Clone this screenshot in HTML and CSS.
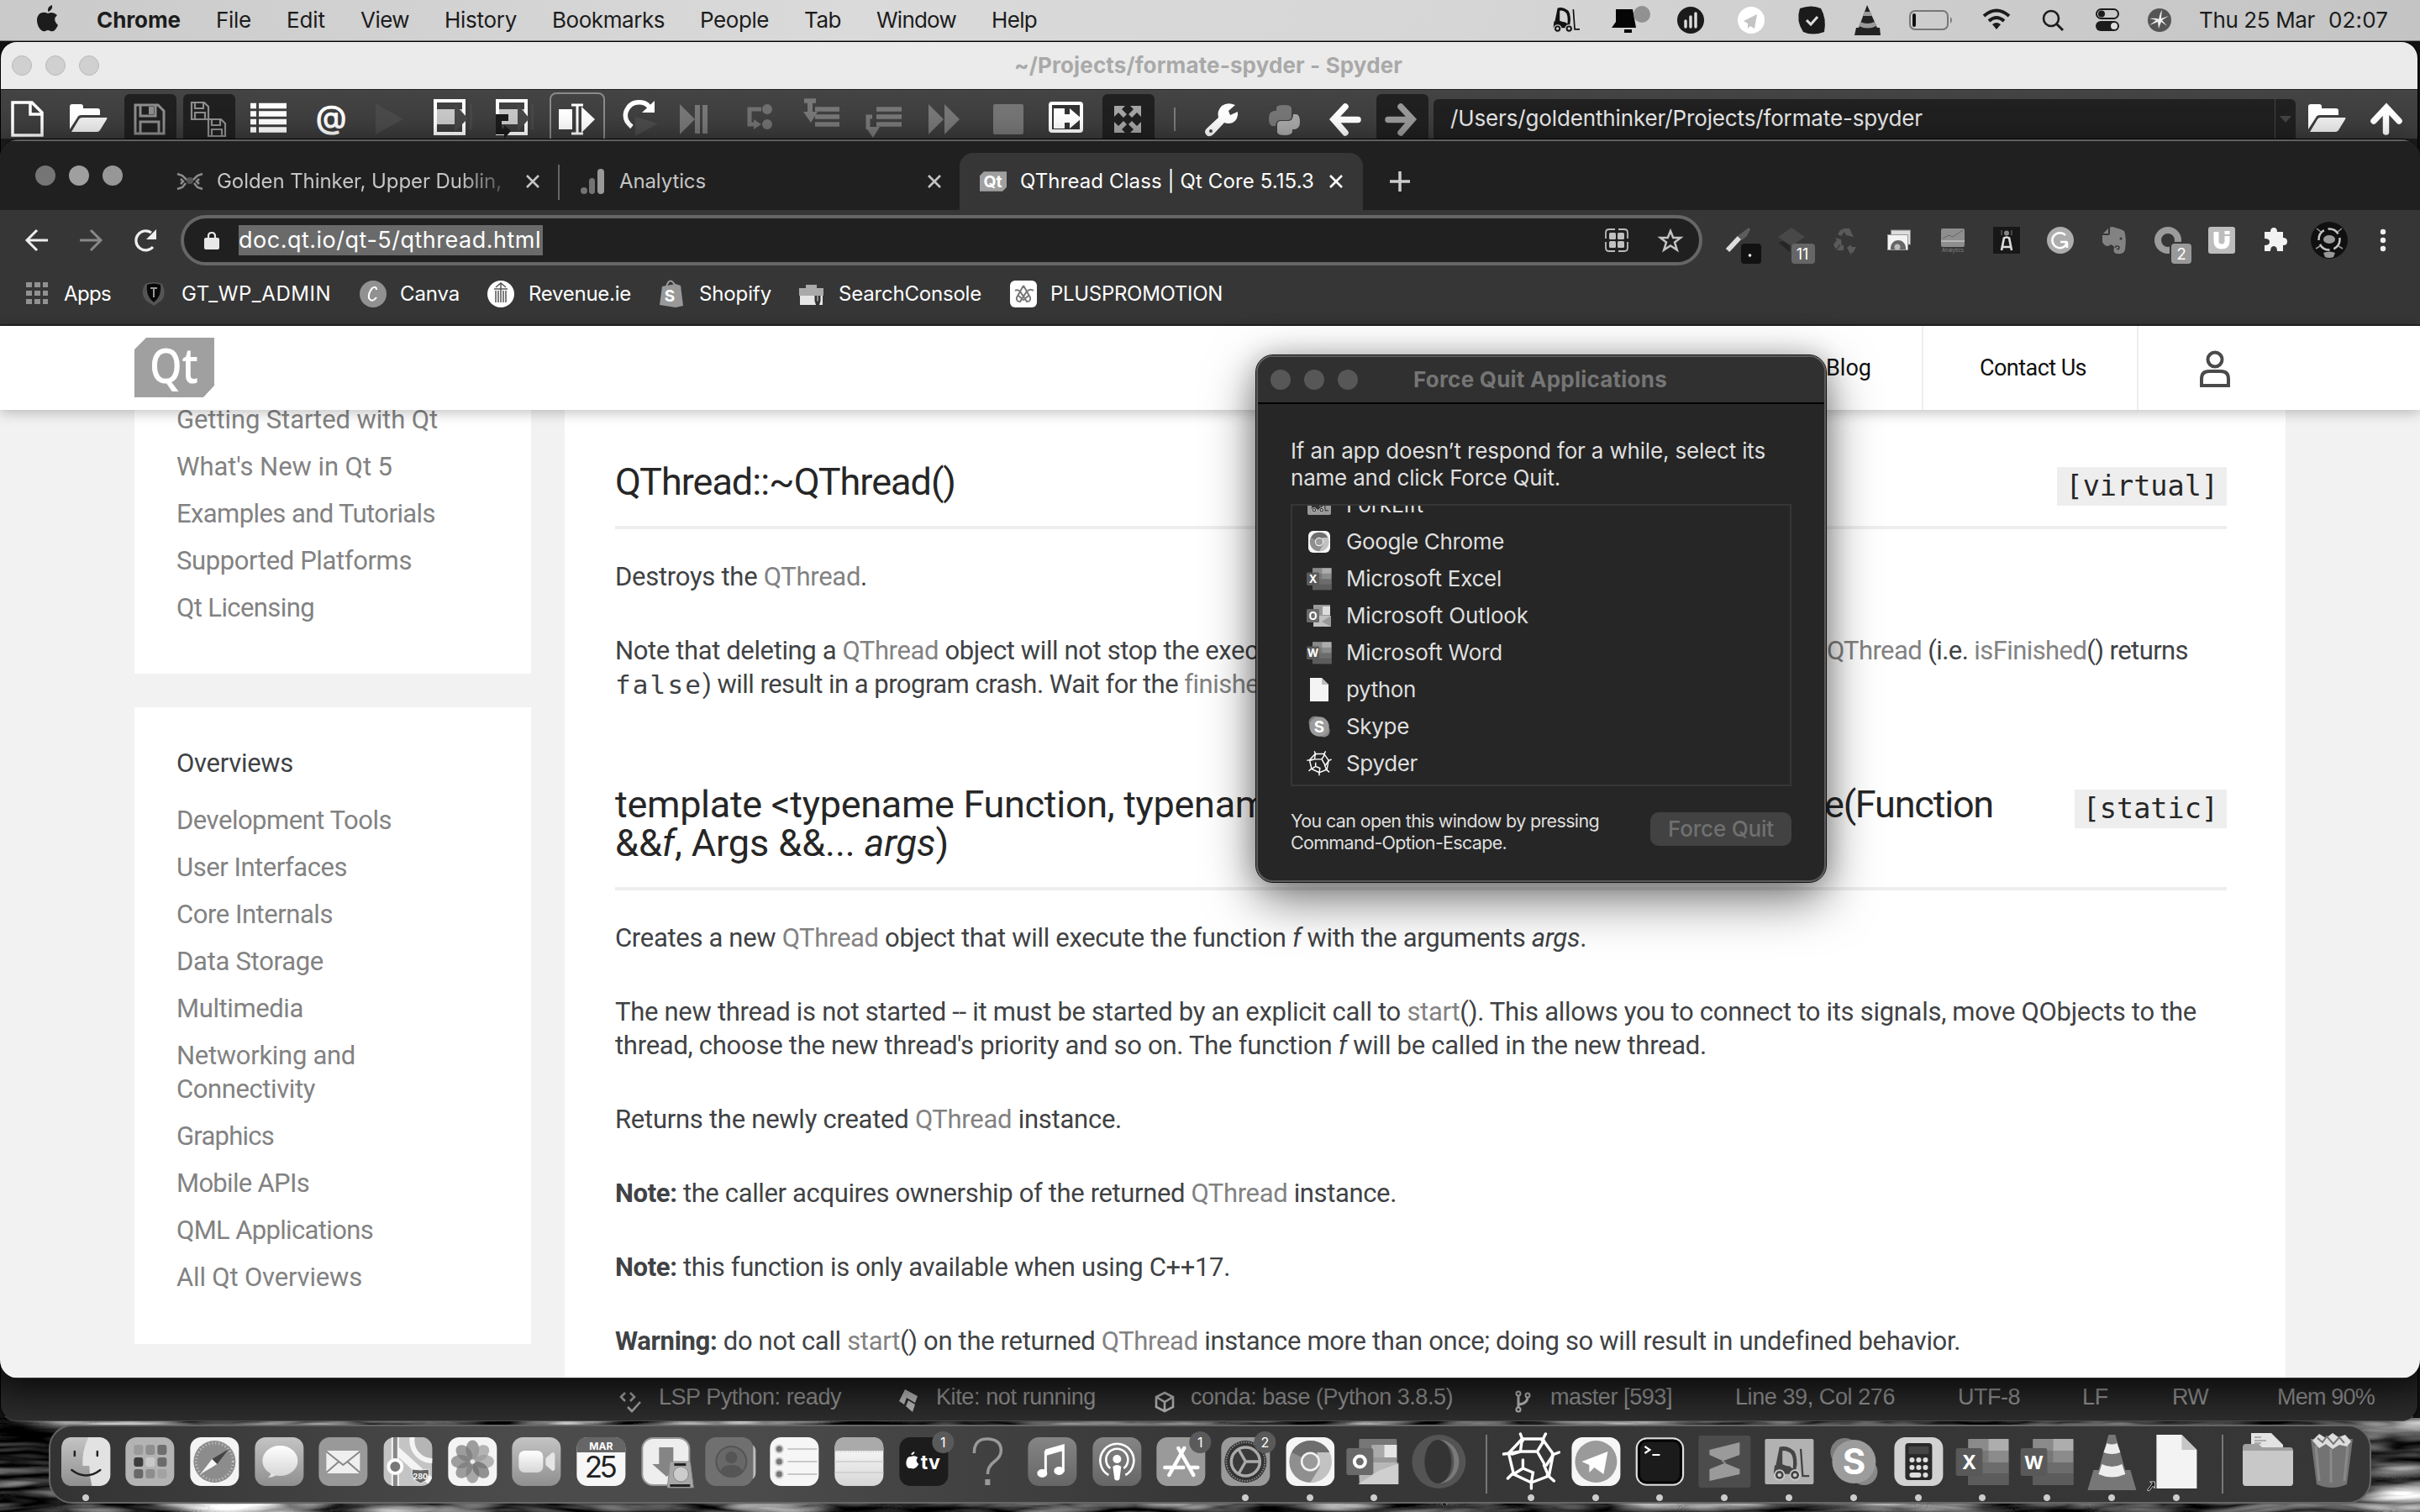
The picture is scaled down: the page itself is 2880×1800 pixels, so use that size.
FILE: index.html
```html
<!DOCTYPE html>
<html lang="en">
<head>
<meta charset="utf-8">
<title>QThread Class | Qt Core 5.15.3</title>
<link rel="stylesheet" href="styles.css">
</head>
<body>
<svg width="0" height="0" class="defs">
  <defs>
    <linearGradient id="lt" x1="0" y1="0" x2="0" y2="1"><stop offset="0" stop-color="#c4c4c4"/><stop offset="1" stop-color="#8f8f8f"/></linearGradient>
    <linearGradient id="md" x1="0" y1="0" x2="0" y2="1"><stop offset="0" stop-color="#858585"/><stop offset="1" stop-color="#666"/></linearGradient>
    <linearGradient id="wh" x1="0" y1="0" x2="0" y2="1"><stop offset="0" stop-color="#fff"/><stop offset="1" stop-color="#d6d6d6"/></linearGradient>
    <filter id="ripple" x="0" y="0" width="100%" height="100%" color-interpolation-filters="sRGB">
      <feTurbulence type="turbulence" baseFrequency="0.005 0.035" numOctaves="3" seed="8"/>
      <feColorMatrix values="1.5 0 0 0 -.12  1.5 0 0 0 -.12  1.5 0 0 0 -.12  0 0 0 0 1"/>
    </filter>
    <symbol id="folder" viewBox="0 0 46 34"><path d="M1 31V4q0-3 3-3h10q3 0 3 3v2h17q3 0 3 3v5H15q-4 0-5 3z" fill="#fff"/><path d="M3 34l9-15q1-2 4-2h29q1 0 0 2l-8 13q-1 2-4 2z" fill="#f0f0f0"/></symbol>
    <symbol id="x" viewBox="0 0 18 18"><path d="M2 2l14 14M16 2L2 16" stroke="currentColor" stroke-width="2.6"/></symbol>
    <symbol id="web" viewBox="0 0 70 70"><g fill="none" stroke="#fff" stroke-width="3.4" stroke-linecap="round"><path d="M22 2l3 8M52 2l-4 8M2 26l8-1M68 24l-8 3M7 55l6-6M62 58l-8-7M35 67V58"/><path d="M24 8l24 0 13 18-5 26-21 8-21-10-6-25z"/><path d="M24 8l-2 15 20 0 8-13M42 23l8 14M10 25l12-2M53 39l8-12M25 33l0 10-11 7M25 43l12 5-2 12M50 39l5 12M22 23l-10 3"/></g></symbol>
    <symbol id="fork" viewBox="0 0 40 40"><path fill-rule="evenodd" fill="currentColor" d="M9 4q8-2 15 4 3 4 3 14l-1 6H7L5 24zM12 8v14l11 4q1-13-3-16-4-3-8-2z"/><path d="M27 28h-5l-2-4-16-1-1 9h26z" fill="currentColor"/><path d="M31 6l2 28h7" fill="none" stroke="currentColor" stroke-width="2"/><g fill="currentColor" stroke="#ccc" stroke-width="1.5"><circle cx="9" cy="33" r="5"/><circle cx="25" cy="33" r="5"/></g><g fill="#ccc"><circle cx="9" cy="33" r="2"/><circle cx="25" cy="33" r="2"/></g></symbol>
    <symbol id="office" viewBox="0 0 64 58"><path d="M16 2h46q1 0 1 1v53q0 1-1 1H16q-1 0-1-1V3q0-1 1-1z" fill="#777"/><path d="M15 2h24v14H15z" fill="#8a8a8a"/><path d="M39 2h24v14H39z" fill="#adadad"/><path d="M39 16h24v14H39z" fill="#8b8b8b"/><path d="M15 30h48v13H15z" fill="#6c6c6c"/><path d="M15 43h48v14H15z" fill="#5c5c5c"/><rect y="13" width="32" height="33" rx="3" fill="#595959"/></symbol>
    <symbol id="chrome" viewBox="0 0 58 58"><rect width="58" height="58" rx="13" fill="#f5f5f5"/><circle cx="29" cy="29" r="25" fill="#8f8f8f"/><path d="M29 29L7 18A25 25 0 0 1 52 18z" fill="#6e6e6e"/><path d="M37 18h15A25 25 0 0 1 29 54l11-18z" fill="#c2c2c2"/><circle cx="29" cy="29" r="11.500" fill="#f2f2f2"/><circle cx="29" cy="29" r="9" fill="#9a9a9a"/></symbol>
    <symbol id="skype" viewBox="0 0 58 58"><circle cx="18" cy="18" r="17" fill="#7d7d7d"/><circle cx="41" cy="41" r="16" fill="#888"/><circle cx="29" cy="29" r="26" fill="#9c9c9c"/><text x="29" y="44" text-anchor="middle" class="glyph bold" font-size="42" fill="#fff">S</text></symbol>
  </defs>
</svg>

<svg class="wallpaper" width="2880" height="112"><rect width="2880" height="112" filter="url(#ripple)"/></svg>

<header class="menubar">
  <svg width="115" height="48" viewBox="0 0 115 48"><path d="M62 6q1 6-5 8-1-6 5-8zM57 16q6-3 11 2-6 5 1 12-4 9-9 7-3-2-6 0c-5 2-10-6-10-13 0-8 7-11 13-8z" fill="#1c1c1c"/></svg>
  <nav class="menus">
    <b data-w="100">Chrome</b><span data-w="42">File</span><span data-w="46">Edit</span><span data-w="58">View</span><span data-w="86">History</span><span data-w="134">Bookmarks</span><span data-w="82">People</span><span data-w="44">Tab</span><span data-w="95">Window</span><span data-w="54">Help</span>
  </nav>
  <div class="tray">
    <svg width="60" height="48" viewBox="1840 0 60 48"><use href="#fork" x="1844" y="6" width="38" height="34" color="#111"/></svg>
    <svg width="80" height="48" viewBox="1900 0 80 48"><path d="M1918 33l5-7V11h20l4 22zM1933 35h9v4h-9z" fill="#050505"/><circle cx="1954" cy="17" r="10" fill="#919191"/></svg>
    <svg width="70" height="48" viewBox="1980 0 70 48"><circle cx="2012" cy="24" r="16" fill="#1b1b1b"/><path d="M2006 32v-7M2012 32V20M2018 32V16" stroke="#ddd" stroke-width="3.4" stroke-linecap="round"/></svg>
    <svg width="70" height="48" viewBox="2050 0 70 48"><circle cx="2084" cy="24" r="16" fill="#fff"/><path d="M2075 25l16-8-3 17-5-3-3 3v-6z" fill="#c4c4c4"/></svg>
    <svg width="72" height="48" viewBox="2120 0 72 48"><path d="M2142 10q14-5 25 0 7 12 4 28-14 5-25 0-9-13-4-28z" fill="#1b1b1b"/><path d="M2150 24l5 5 8-9" fill="none" stroke="#ddd" stroke-width="3"/></svg>
    <svg width="68" height="48" viewBox="2192 0 68 48"><path d="M2222 6l12 27h3l1 9h-31l2-9h3z" fill="#222"/><path d="M2219 14h7l2 5h-11zM2214 26q8 4 17 0l2 5q-10 5-21 0z" fill="#999"/></svg>
    <svg width="85" height="48" viewBox="2260 0 85 48"><rect x="2273" y="13" width="45" height="22" rx="6" fill="none" stroke="#777" stroke-width="2"/><rect x="2276" y="16" width="4" height="16" rx="2" fill="#111"/><path d="M2321 20q4 4 0 8z" fill="#777"/></svg>
    <svg width="70" height="48" viewBox="2345 0 70 48"><g fill="none" stroke="#1b1b1b" stroke-width="4"><path d="M2361 19q15-13 30 0M2367 25q9-8 18 0"/></g><path d="M2371 29q5-4 10 0l-5 6z" fill="#1b1b1b"/></svg>
    <svg width="60" height="48" viewBox="2415 0 60 48"><circle cx="2441" cy="22" r="9" fill="none" stroke="#1b1b1b" stroke-width="2.6"/><path d="M2447 28l8 8" stroke="#1b1b1b" stroke-width="3"/></svg>
    <svg width="65" height="48" viewBox="2475 0 65 48"><rect x="2495" y="11" width="26" height="11" rx="5.500" fill="none" stroke="#1b1b1b" stroke-width="2"/><circle cx="2501" cy="16.500" r="4" fill="#1b1b1b"/><rect x="2494" y="25" width="28" height="12" rx="6" fill="#1b1b1b"/><circle cx="2516" cy="31" r="4" fill="#ddd"/></svg>
    <svg width="77" height="48" viewBox="2540 0 77 48"><circle cx="2570" cy="24" r="14" fill="#555"/><path d="M2558 22q9-1 11 1 2-9 4-11-1 8-1 10l9-3-8 5 6 7-7-5-3 8-1-8-10 4 8-6z" fill="#eee"/></svg>
    <span class="date" data-w="138">Thu 25 Mar</span><span data-w="71">02:07</span>
  </div>
</header>

<section class="window spyder">
  <div class="titlebar">
    <div class="lights"><i></i><i></i><i></i></div>
    <b data-w="462">~/Projects/formate-spyder - Spyder</b>
  </div>
  <div class="tools">
    <svg width="68" height="58" viewBox="0 107 68 58"><path d="M15 122h23l12 12v27H15zM36 122v14h14" fill="none" stroke="#fff" stroke-width="3.5"/></svg>
    <svg width="74" height="58" viewBox="68 107 74 58"><use href="#folder" x="82" y="123" width="46" height="34"/></svg>
    <svg width="72" height="58" viewBox="142 107 72 58"><rect x="148" y="112" width="62" height="60" rx="6" fill="#202020"/><g fill="none" stroke="#8d8d8d" stroke-width="3"><path d="M161 125h27l7 7v27h-34z"/><path d="M167 125v13h18v-13M167 159v-14h22v14"/></g><path d="M177 127h6v9h-6z" fill="#8d8d8d"/></svg>
    <svg width="72" height="58" viewBox="214 107 72 58"><rect x="218" y="112" width="62" height="60" rx="6" fill="#202020"/><g fill="none" stroke="#8d8d8d" stroke-width="2.200"><path d="M228 122h15l5 5v15h-20zM232 122v7h10v-7M232 142v-8h12v8"/><path d="M248 142h15l5 5v15h-20zM252 142v7h10v-7M252 162v-8h12v8"/></g></svg>
    <svg width="74" height="58" viewBox="286 107 74 58"><path d="M298 126h7M298 135.500h7M298 145h7M298 154.500h7" stroke="#fff" stroke-width="6.500"/><path d="M308 126h33M308 135.500h33M308 145h33M308 154.500h33" stroke="#fff" stroke-width="6.500"/></svg>
    <svg width="72" height="58" viewBox="360 107 72 58"><text x="394" y="153" text-anchor="middle" class="glyph" font-size="38" fill="#fff" stroke="#fff">@</text></svg>
    <svg width="66" height="58" viewBox="432 107 66 58"><path d="M447 123l33 19-33 18z" fill="#4a4a4a"/></svg>
    <svg width="74" height="58" viewBox="498 107 74 58"><rect x="518" y="120" width="34" height="39" fill="none" stroke="#fff" stroke-width="4"/><path d="M520 130h30v18h-30z" fill="#c8c8c8"/><path d="M541 124l16 17-16 16zM559 124h3v30h-3z" fill="#484848"/></svg>
    <svg width="76" height="58" viewBox="572 107 76 58"><rect x="592" y="120" width="34" height="39" fill="none" stroke="#fff" stroke-width="4"/><path d="M594 130h30v18h-30z" fill="#c8c8c8"/><path d="M616 124l14 17-14 16zM632 124h3v30h-3z" fill="#484848"/><path d="M590 136h15v8h-8v9h3v-4l8 7-8 9v-5h-10z" fill="#1b1b1b"/></svg>
    <svg width="80" height="58" viewBox="648 107 80 58"><rect x="655" y="111" width="64" height="60" rx="7" fill="none" stroke="#8a8a8a" stroke-width="2"/><path d="M665 130h16v24h-16zM692 127l16 15-16 16z" fill="#fff"/><path d="M680 125h14M680 159h14M687 125v34" stroke="#fff" stroke-width="3"/></svg>
    <svg width="72" height="58" viewBox="728 107 72 58"><path d="M756 139l27 8-27 15z" fill="#4b4b4b"/><path d="M752 151q-10-8-7-18 5-13 19-11 7 1 10 8" fill="none" stroke="#fff" stroke-width="5.500"/><path d="M779 120v14h-15z" fill="#fff"/></svg>
    <svg width="68" height="58" viewBox="800 107 68 58"><path d="M809 124l18 18-18 18zM827 125h6v34h-6zM836 125h6v34h-6z" fill="#777"/></svg>
    <svg width="72" height="58" viewBox="868 107 72 58"><path d="M906 130h-14v18h9" fill="none" stroke="#707070" stroke-width="5"/><circle cx="913" cy="130" r="6" fill="#707070"/><circle cx="913" cy="148" r="6" fill="#707070"/><path d="M897 142l9 6-9 6z" fill="#707070"/></svg>
    <svg width="74" height="58" viewBox="940 107 74 58"><path d="M957 120h14M970 130h29M970 139h29M970 148h29" stroke="#777" stroke-width="5.500"/><path d="M961 120v13h-5l9 13 8-13h-6v-13z" fill="#777"/></svg>
    <svg width="74" height="58" viewBox="1014 107 74 58"><path d="M1043 130h30M1043 139h30M1043 148h30" stroke="#777" stroke-width="5.500"/><path d="M1038 139h-5v15" fill="none" stroke="#777" stroke-width="5"/><path d="M1030 151h17l-8 13z" fill="#777"/></svg>
    <svg width="76" height="58" viewBox="1088 107 76 58"><path d="M1105 124l18 18-18 18zM1124 124l18 18-18 18z" fill="#777"/></svg>
    <svg width="70" height="58" viewBox="1164 107 70 58"><rect x="1182" y="124" width="36" height="36" rx="2" fill="#757575"/></svg>
    <svg width="72" height="58" viewBox="1234 107 72 58"><rect x="1250" y="123" width="37" height="33" rx="2" fill="#333" stroke="#fff" stroke-width="4"/><path d="M1254 129h13v24h-13z" fill="#fff"/><path d="M1262 136h11v-7l14 12-14 12v-7h-11z" fill="#fff"/></svg>
    <svg width="74" height="58" viewBox="1306 107 74 58"><rect x="1312" y="112" width="62" height="60" rx="6" fill="#202020"/><g fill="#a5a5a5"><path d="M1326 126h13l-4 4 6 6-4 4-6-6-5 5zM1358 126v13l-5-5-6 6-4-4 6-6-4-4zM1326 158v-13l5 5 6-6 4 4-6 6 4 4zM1358 158h-13l4-4-6-6 4-4 6 6 5-5z"/></g></svg>
    <svg width="40" height="58" viewBox="1380 107 40 58"><path d="M1398 128v28" stroke="#7a7a7a" stroke-width="2"/></svg>
    <svg width="72" height="58" viewBox="1420 107 72 58"><path d="M1470 125l-8 7 2 5 9-4q1 9-6 13-5 2-10 0l-13 14q-5 4-8 1-4-4 0-8l14-13q-2-8 4-14 7-5 16-1z" fill="#fff"/><circle cx="1441" cy="156" r="2" fill="#444"/></svg>
    <svg width="76" height="58" viewBox="1492 107 76 58"><path d="M1519 132v-4q1-3 9-3 9 0 9 4v10q0 4-5 4h-9q-5 1-5 7h-4q-4-1-4-9 0-8 6-9z" fill="#767676"/><path d="M1538 154v3q-1 4-9 4-9 0-9-4v-9q0-4 5-4h9q5-1 5-8h4q4 1 4 9 0 8-6 9z" fill="#a9a9a9"/></svg>
    <svg width="66" height="58" viewBox="1568 107 66 58"><path d="M1601 127l-14 15 14 16M1588 142.500h28" fill="none" stroke="#fff" stroke-width="7.500" stroke-linecap="round"/></svg>
    <svg width="72" height="58" viewBox="1634 107 72 58"><rect x="1638" y="112" width="62" height="60" rx="6" fill="#202020"/><path d="M1667 127l14 15-14 16M1680 142.500h-28" fill="none" stroke="#999" stroke-width="7.500" stroke-linecap="round"/></svg>
    <div class="path"><span data-w="562">/Users/goldenthinker/Projects/formate-spyder</span><i><svg width="14" height="8" viewBox="0 0 14 8"><path d="M0 0h14L7 8z" fill="#444"/></svg></i></div>
    <svg width="74" height="58" viewBox="2732 107 74 58"><use href="#folder" x="2746" y="123" width="46" height="34"/></svg>
    <svg width="72" height="58" viewBox="2806 107 72 58"><path d="M2825 144l15-16 15 16M2839.500 130v27" fill="none" stroke="#fff" stroke-width="7.500" stroke-linecap="round"/></svg>
  </div>
  <div class="status">
    <svg width="46" height="48" viewBox="738 1642 46 48"><path d="M744 1658l-5 5 5 5M750 1658l5 5-5 5M747 1675l5 5 10-11" fill="none" stroke="#999" stroke-width="2.600"/></svg>
    <span data-w="217">LSP Python: ready</span>
    <svg width="44" height="48" viewBox="1070 1642 44 48"><path d="M1077 1654l15 8-3 8-10-6-3 8-6-4zM1081 1667l8 5-3 9-8-7z" fill="#aaa"/></svg>
    <span data-w="190">Kite: not running</span>
    <svg width="42" height="48" viewBox="1375 1642 42 48"><path d="M1386 1658l10 5v12l-10 5-10-5v-12zM1376 1663l10 6 10-6M1386 1669v11" fill="none" stroke="#aaa" stroke-width="2.600"/></svg>
    <span data-w="312">conda: base (Python 3.8.5)</span>
    <svg width="42" height="48" viewBox="1803 1642 42 48"><path d="M1807 1660v16M1807 1672q11-1 11-9" fill="none" stroke="#aaa" stroke-width="3"/><g fill="#292929" stroke="#aaa" stroke-width="2"><circle cx="1807" cy="1659" r="2.500"/><circle cx="1807" cy="1678" r="2.500"/><circle cx="1818" cy="1661" r="2.500"/></g></svg>
    <span data-w="145">master [593]</span><span data-w="190">Line 39, Col 276</span><span data-w="74">UTF-8</span><span data-w="31">LF</span><span data-w="43">RW</span><span data-w="116">Mem 90%</span>
  </div>
</section>

<section class="window chrome">
  <div class="tabs">
    <div class="lights"><i></i><i></i><i></i></div>
    <div class="tab t1"><svg width="32" height="32" viewBox="0 0 32 32"><path d="M1 7l6 2 4 4 3 2h4l3-2 4-4 6-2M1 25l6-2 4-5M31 25l-6-2-4-5M5 13l3 3-3 3M27 13l-3 3 3 3" fill="none" stroke="#8c8c8c" stroke-width="2.500"/><circle cx="16" cy="15" r="4" fill="#555"/></svg><span class="fade" data-w="339">Golden Thinker, Upper Dublin,</span><svg class="close" width="18" height="18"><use href="#x"/></svg></div>
    <div class="tab t2"><svg width="28" height="30" viewBox="0 0 28 30"><circle cx="4" cy="26" r="4" fill="#737373"/><rect x="10" y="11" width="7" height="19" rx="3.500" fill="#737373"/><rect x="20" y="0" width="8" height="30" rx="4" fill="#999"/></svg><span data-w="103">Analytics</span><svg class="close" width="18" height="18"><use href="#x"/></svg></div>
    <div class="tab active"><svg width="32" height="24" viewBox="0 0 33 24"><path d="M5 0h28v19l-5 5H0V5z" fill="#a0a0a0"/><text x="16" y="19" text-anchor="middle" class="glyph bold" font-size="20" fill="#fff">Qt</text></svg><span data-w="350">QThread Class | Qt Core 5.15.3</span><svg class="close" width="18" height="18"><use href="#x"/></svg></div>
    <svg width="88" height="68" viewBox="0 0 88 68"><path d="M44 22v24M32 34h24" stroke="#ccc" stroke-width="3.500"/></svg>
  </div>
  <div class="toolbar">
    <svg width="76" height="68" viewBox="0 252 76 68"><path d="M57 286H32M44 274l-12 12 12 12" fill="none" stroke="#eee" stroke-width="3"/></svg>
    <svg width="64" height="68" viewBox="76 252 64 68"><path d="M95 286h25M108 274l12 12-12 12" fill="none" stroke="#888" stroke-width="3"/></svg>
    <svg width="75" height="68" viewBox="140 252 75 68"><path d="M182 294a11.500 11.500 0 1 1-2-17" fill="none" stroke="#eee" stroke-width="3.200"/><path d="M186 273v12h-12z" fill="#eee"/></svg>
    <div class="omnibox">
      <svg width="18" height="22" viewBox="0 0 18 22"><rect y="8" width="18" height="14" rx="2" fill="#e8e8e8"/><path d="M5 9V6q0-4 4-4t4 4v3" fill="none" stroke="#e8e8e8" stroke-width="2.200"/></svg>
      <span class="sel"><span data-w="360">doc.qt.io/qt-5/qthread.html</span></span>
      <svg class="qr" width="28" height="28" viewBox="0 0 28 28"><path d="M1 12V5q0-4 4-4h7M16 1h7q4 0 4 4v7M27 16v7q0 4-4 4h-7M12 27H5q-4 0-4-4v-7" fill="none" stroke="#bbb" stroke-width="1.800"/><g fill="#c0c0c0"><rect x="5" y="5" width="8" height="8" rx="1.500"/><rect x="15" y="5" width="8" height="8" rx="1.500"/><rect x="5" y="15" width="8" height="8" rx="1.500"/><rect x="15" y="15" width="8" height="8" rx="1.500"/></g></svg>
      <svg width="30" height="30" viewBox="0 0 30 30"><path d="M15 4l3.200 8H27l-7 5.500 2.800 9L15 21.500l-7.800 5 2.800-9L3 12h8.800z" fill="none" stroke="#c4c4c4" stroke-width="2.500"/></svg>
    </div>
    <svg width="74" height="68" viewBox="2026 252 74 68"><path d="M2056 298l14-15" stroke="#ddd" stroke-width="6"/><path d="M2068 281l13-10 2 2-4 8-6 5z" fill="#5c5c5c"/><rect x="2072" y="290" width="24" height="24" rx="4" fill="#121212"/><circle cx="2082.500" cy="304" r="1.800" fill="#fff"/></svg>
    <svg width="64" height="68" viewBox="2100 252 64 68"><path d="M2132 271l16 11-16 11-16-11z" fill="#484848"/><path d="M2117 289l5-2 8 5v8z" fill="#252525"/><rect x="2132" y="290" width="28" height="24" rx="4" fill="#666"/><text x="2145" y="309" text-anchor="middle" class="glyph" font-size="18" fill="#fff">11</text></svg>
    <svg width="64" height="68" viewBox="2164 252 64 68"><path d="M2190 274l5-2h6l5 10-9-2-2-4-4 5-4-2zM2184 283l7 2 1 8-3-2-4 6-3-6 4-5zM2186 298h8v-6h-4M2198 295l5-4v3h6l-4 7h-2v3z" fill="#5a5a5a"/></svg>
    <svg width="64" height="68" viewBox="2228 252 64 68"><rect x="2250.500" y="274" width="23" height="17" fill="#ddd" stroke="#888"/><rect x="2246.500" y="279.500" width="24" height="18" fill="#f4f4f4" stroke="#999"/><path d="M2250 297v-3q2-8 9-8t9 8v3z" fill="#666"/><circle cx="2258" cy="294" r="3.500" fill="#bbb"/></svg>
    <svg width="64" height="68" viewBox="2292 252 64 68"><rect x="2310" y="272" width="28" height="22" rx="2" fill="#8e8e8e"/><path d="M2312 284l7-4 5 2 12-8" fill="none" stroke="#666"/><path d="M2310 287h28" stroke="#ddd"/><text x="2324" y="300" text-anchor="middle" class="glyph" font-size="6" fill="#888">Analytics</text></svg>
    <svg width="64" height="68" viewBox="2356 252 64 68"><rect x="2372" y="270" width="32" height="32" fill="#171717"/><path d="M2385 283l-3 15M2391 283l3 15M2384 284q4-3 8 0M2384 294h8" fill="none" stroke="#ddd" stroke-width="2.600"/><circle cx="2388" cy="277.500" r="3" fill="#888"/><path d="M2382 274v6M2394 274v6" stroke="#777"/></svg>
    <svg width="64" height="68" viewBox="2420 252 64 68"><circle cx="2452" cy="286" r="16" fill="#adadad"/><path d="M2458 280a9 9 0 1 0 1 11v-3h-7M2460 288v7" fill="none" stroke="#fff" stroke-width="2.500"/></svg>
    <svg width="64" height="68" viewBox="2484 252 64 68"><path d="M2502 280v8q2 5 7 5l3-2q4 2 4 3-2 8 4 8 8 1 9-5 2-14-1-22-5-3-11-4-4-2-6 0v7q0 2-2 2z" fill="#828282"/><path d="M2503 278l6-6v6z" fill="#828282"/><path d="M2517 295q2-4 5-1 0 4-3 2" fill="none" stroke="#363636" stroke-width="1.500"/><circle cx="2524" cy="284" r="1.500" fill="#363636"/></svg>
    <svg width="64" height="68" viewBox="2548 252 64 68"><circle cx="2580" cy="286" r="12" fill="none" stroke="#9b9b9b" stroke-width="8"/><rect x="2582" y="288" width="28" height="28" rx="6" fill="#363636"/><rect x="2584" y="290" width="24" height="24" rx="4" fill="#999"/><text x="2596" y="309" text-anchor="middle" class="glyph" font-size="19" fill="#fff">2</text></svg>
    <svg width="64" height="68" viewBox="2612 252 64 68"><rect x="2628" y="270" width="32" height="32" rx="3" fill="#bdbdbd"/><path d="M2637.500 276v11q0 6.500 6.500 6.500t6.500-6.500v-6" fill="none" stroke="#fff" stroke-width="6"/><rect x="2647.500" y="275" width="6" height="4" fill="#fff"/></svg>
    <svg width="60" height="68" viewBox="2676 252 60 68"><path d="M2695 276h7q0-5 4-5t4 5h7v7q5 0 5 4.500t-5 4.500v7h-7q0-6-4-6t-4 6h-7v-7q6 0 6-4t-6-4z" fill="#f2f2f2"/></svg>
    <svg width="76" height="68" viewBox="2736 252 76 68"><circle cx="2772" cy="286" r="22" fill="#101010"/><circle cx="2772" cy="285" r="12.500" fill="none" stroke="#c4c4c4" stroke-width="2.500" stroke-dasharray="14 5"/><ellipse cx="2772" cy="285" rx="7" ry="5" fill="#999"/><path d="M2757 272l5 4M2787 272l-5 4M2756 296l5-3M2788 296l-5-3" stroke="#999" stroke-width="1.500"/><path d="M2765 301q7-3 14 0l-2 5q-5 2-10 0z" fill="#999"/></svg>
    <svg width="60" height="68" viewBox="2812 252 60 68"><g fill="#eee"><circle cx="2836" cy="276" r="3.200"/><circle cx="2836" cy="286" r="3.200"/><circle cx="2836" cy="296" r="3.200"/></g></svg>
  </div>
  <div class="bookmarks">
    <svg width="76" height="40" viewBox="0 330 76 40"><path d="M31 339h7M41 339h7M51 339h6M31 349h7M41 349h7M51 349h6M31 359h7M41 359h7M51 359h6" stroke="#919191" stroke-width="6"/></svg><span data-w="56">Apps</span>
    <svg width="51" height="40" viewBox="0 0 51 40"><path d="M8 8q9-4 20 0 6 12-1 20l-9 6-9-6q-8-9-1-20z" fill="#555"/><path d="M10 9q8-3 16 0 2 13-8 21-10-8-8-21z" fill="#080808"/><path d="M14 13h8M18 13v11" stroke="#999" stroke-width="2"/></svg><span data-w="178">GT_WP_ADMIN</span>
    <svg width="49" height="40" viewBox="0 0 49 40"><circle cx="17" cy="20" r="16" fill="#919191"/><path d="M21 15q0-5-5-2-5 6-4 12 4 6 9-1" fill="none" stroke="#fff" stroke-width="2"/></svg><span data-w="71">Canva</span>
    <svg width="49" height="40" viewBox="0 0 49 40"><circle cx="16" cy="20" r="16" fill="#fff"/><path d="M8 14h16M16 8v22M10 16v14M22 16v14M13 16v14M19 16v14M10 12l6-5 6 5" fill="none" stroke="#555" stroke-width="1.500"/></svg><span data-w="122">Revenue.ie</span>
    <svg width="48" height="40" viewBox="0 0 48 40"><path d="M4 11l16-3 6 2 3 24-9 2-19-3z" fill="#999"/><path d="M9 11q4-12 10-2" fill="none" stroke="#999" stroke-width="2"/><text x="13" y="29" text-anchor="middle" class="glyph bold" font-size="19" fill="#fff">S</text></svg><span data-w="86">Shopify</span>
    <svg width="47" height="40" viewBox="0 0 47 40"><path d="M1 14h27v19H1z" fill="#e6e6e6"/><path d="M1 14h27v7H1zM9 14v-4h11v4" fill="#aaa" stroke="#aaa" stroke-width="2"/><path d="M20 22v6l2 6 2-6v-6" fill="none" stroke="#333" stroke-width="3"/></svg><span data-w="170">SearchConsole</span>
    <svg width="49" height="40" viewBox="0 0 49 40"><rect x="1" y="4" width="32" height="32" rx="6" fill="#fff"/><path d="M17 10l-8 14q-1 5 4 5l8-12q4-4 8-1M17 10l8 14q1 5-4 5l-8-12q-3-3-6-1M11 22l6 5 6-5" fill="none" stroke="#777" stroke-width="2"/></svg><span data-w="205">PLUSPROMOTION</span>
  </div>
  <div class="page">
    <header class="site">
      <svg class="logo" width="95" height="71" viewBox="0 0 95 71"><path d="M14 0h81v57L82 71H0V14z" fill="#a0a0a0"/><text x="47" y="54" text-anchor="middle" class="qt" font-size="58" fill="#fff" textLength="58" lengthAdjust="spacingAndGlyphs">Qt</text></svg>
      <nav><span data-w="54">Blog</span><span class="contact"><span data-w="127">Contact Us</span></span><span class="user"><svg width="38" height="44" viewBox="0 0 38 44"><circle cx="19" cy="11" r="8.500" fill="none" stroke="#4a4a4a" stroke-width="4"/><path d="M3 42V34q0-9 9-9h14q9 0 9 9v8z" fill="none" stroke="#4a4a4a" stroke-width="4"/></svg></span></nav>
    </header>
    <div class="columns">
      <aside>
        <ul class="card first"><li><span data-w="311">Getting Started with Qt</span></li><li><span data-w="257">What's New in Qt 5</span></li><li><span data-w="308">Examples and Tutorials</span></li><li><span data-w="280">Supported Platforms</span></li><li><span data-w="164">Qt Licensing</span></li></ul>
        <div class="card second"><h3><span data-w="139">Overviews</span></h3>
        <ul><li><span data-w="256">Development Tools</span></li><li><span data-w="203">User Interfaces</span></li><li><span data-w="186">Core Internals</span></li><li><span data-w="175">Data Storage</span></li><li><span data-w="151">Multimedia</span></li><li><span data-w="213">Networking and</span><br><span data-w="165">Connectivity</span></li><li><span data-w="116">Graphics</span></li><li><span data-w="158">Mobile APIs</span></li><li><span data-w="234">QML Applications</span></li><li><span data-w="221">All Qt Overviews</span></li></ul></div>
      </aside>
      <main>
        <h2><div><span data-w="405">QThread::~QThread()</span></div><code>[virtual]</code></h2>
        <p><span data-w="300">Destroys the <a>QThread</a>.</span></p>
        <p><span data-w="765">Note that deleting a <a>QThread</a> object will not stop the exec</span><span class="covered" data-w="430"><a>QThread</a> (i.e. <a>isFinished</a>() returns</span><br><span class="mono" data-w="104">false</span><span data-w="661">) will result in a program crash. Wait for the <a>finishe</a></span></p>
        <h2><div><span data-w="777">template &lt;typename Function, typenam</span><span class="covered" data-w="201">e(Function</span><br><span data-w="397">&amp;&amp;<i>f</i>, Args &amp;&amp;... <i>args</i>)</span></div><code>[static]</code></h2>
        <p><span data-w="1156">Creates a new <a>QThread</a> object that will execute the function <i>f</i> with the arguments <i>args</i>.</span></p>
        <p><span data-w="1882">The new thread is not started -- it must be started by an explicit call to <a>start</a>(). This allows you to connect to its signals, move QObjects to the</span><br><span data-w="1299">thread, choose the new thread's priority and so on. The function <i>f</i> will be called in the new thread.</span></p>
        <p><span data-w="603">Returns the newly created <a>QThread</a> instance.</span></p>
        <p><span data-w="930"><b>Note:</b> the caller acquires ownership of the returned <a>QThread</a> instance.</span></p>
        <p><span data-w="732"><b>Note:</b> this function is only available when using C++17.</span></p>
        <p><span data-w="1600"><b>Warning:</b> do not call <a>start</a>() on the returned <a>QThread</a> instance more than once; doing so will result in undefined behavior.</span></p>
      </main>
    </div>
  </div>
</section>

<section class="window dialog">
  <div class="titlebar"><div class="lights"><i></i><i></i><i></i></div><b data-w="302">Force Quit Applications</b></div>
  <div class="body">
    <p><span data-w="565">If an app doesn’t respond for a while, select its</span><br><span data-w="321">name and click Force Quit.</span></p>
    <ul>
      <li><svg width="30" height="32" viewBox="0 0 30 32"><rect x="1" y="2" width="28" height="26" rx="2" fill="#999"/><use href="#fork" x="4" y="3" width="22" height="24" color="#333"/></svg><span data-w="92">ForkLift</span></li>
      <li><svg width="30" height="32" viewBox="0 0 30 32"><use href="#chrome" x="2" y="3" width="26" height="26"/></svg><span data-w="188">Google Chrome</span></li>
      <li><svg width="30" height="32" viewBox="0 0 30 32"><use href="#office" y="2" width="30" height="28"/><text x="7.500" y="21" text-anchor="middle" class="glyph bold" font-size="13" fill="#fff">X</text></svg><span data-w="185">Microsoft Excel</span></li>
      <li><svg width="30" height="32" viewBox="0 0 30 32"><path d="M8 3h20v13H8z" fill="#999"/><path d="M19 5h9v10h-9z" fill="#ddd"/><path d="M8 16h21v13H8z" fill="#c0c0c0"/><path d="M29 16v13L18 23z" fill="#999"/><rect y="8" width="15" height="16" rx="1.500" fill="#6a6a6a"/><text x="7.500" y="21" text-anchor="middle" class="glyph bold" font-size="13" fill="#fff">O</text></svg><span data-w="217">Microsoft Outlook</span></li>
      <li><svg width="30" height="32" viewBox="0 0 30 32"><use href="#office" y="2" width="30" height="28"/><text x="7.500" y="21" text-anchor="middle" class="glyph bold" font-size="13" fill="#fff">W</text></svg><span data-w="186">Microsoft Word</span></li>
      <li><svg width="30" height="32" viewBox="0 0 30 32"><path d="M4 2h14l8 8v20H4z" fill="#f4f4f4"/><path d="M18 2v8h8z" fill="#bbb"/></svg><span data-w="83">python</span></li>
      <li><svg width="30" height="32" viewBox="0 0 30 32"><use href="#skype" x="2" y="3" width="26" height="26"/></svg><span data-w="75">Skype</span></li>
      <li><svg width="30" height="32" viewBox="0 0 30 32"><use href="#web" y="1" width="30" height="30"/></svg><span data-w="85">Spyder</span></li>
    </ul>
    <footer><p><span data-w="367">You can open this window by pressing</span><br><span data-w="257">Command-Option-Escape.</span></p><button><span data-w="126">Force Quit</span></button></footer>
  </div>
</section>

<div class="dock">
  <div class="g1">
    <svg class="on" viewBox="-9 -14 76 92"><rect width="58" height="58" rx="13" fill="#e2e2e2"/><path d="M13 0h19q-8 16-7 34h8q0 12 3 24H13Q0 58 0 45V13Q0 0 13 0z" fill="url(#lt)"/><path d="M15.500 17v5M42.500 17v5M12 39q17 13 34 0" fill="none" stroke="#222" stroke-width="2.500" stroke-linecap="round"/></svg>
    <svg viewBox="-9 -14 76 92"><rect width="58" height="58" rx="13" fill="#b3b3b3"/><g><rect x="10" y="9" width="11" height="12" rx="3" fill="#9a9a9a"/><rect x="24" y="9" width="11" height="12" rx="3" fill="#8e8e8e"/><rect x="38" y="9" width="11" height="12" rx="3" fill="#6e6e6e"/><rect x="10" y="24" width="11" height="11" rx="3" fill="#3d3d3d"/><rect x="24" y="24" width="11" height="11" rx="3" fill="#c9c9c9"/><rect x="38" y="24" width="11" height="11" rx="3" fill="#6b6b6b"/><rect x="10" y="38" width="11" height="11" rx="3" fill="#686868"/><rect x="24" y="38" width="11" height="11" rx="3" fill="#8d8d8d"/><rect x="38" y="38" width="11" height="11" rx="3" fill="#a2a2a2"/></g></svg>
    <svg viewBox="-9 -14 76 92"><rect width="58" height="58" rx="13" fill="#f4f4f4"/><circle cx="29" cy="29" r="25" fill="#8c8c8c"/><circle cx="29" cy="29" r="22" fill="none" stroke="#ccc" stroke-width="3" stroke-dasharray="1 3"/><path d="M46 14L26 26l6 6z" fill="#444"/><path d="M12 44l14-18 6 6z" fill="#f5f5f5"/></svg>
    <svg viewBox="-9 -14 76 92"><rect width="58" height="58" rx="13" fill="url(#lt)"/><ellipse cx="30" cy="28" rx="21" ry="18" fill="url(#wh)"/><path d="M19 42q0 4-4 6 8 0 11-4z" fill="#e0e0e0"/></svg>
    <svg viewBox="-9 -14 76 92"><rect width="58" height="58" rx="13" fill="#999"/><rect x="9" y="16" width="40" height="27" rx="2" fill="#efefef"/><path d="M9 17l20 16 20-16M9 42l15-13M49 42L34 29" fill="none" stroke="#888" stroke-width="2"/></svg>
    <svg viewBox="-9 -14 76 92"><clipPath id="mapclip"><rect width="58" height="58" rx="13"/></clipPath><g clip-path="url(#mapclip)"><rect width="58" height="58" fill="#c4c4c4"/><circle cx="58" cy="4" r="24" fill="#b5b5b5" stroke="#f4f4f4" stroke-width="6"/><path d="M14 0v58M14 14l44 40" stroke="#f4f4f4" stroke-width="9"/><path d="M14 0v58" stroke="#888" stroke-width="5"/></g><circle cx="14" cy="35" r="8" fill="#777" stroke="#fff" stroke-width="4"/><path d="M34 38q10 2 20 0 2 13-10 17-12-5-10-17z" fill="#666" stroke="#eee"/><text x="44" y="50" text-anchor="middle" class="glyph bold" font-size="9" fill="#fff">280</text></svg>
    <svg viewBox="-9 -14 76 92"><rect width="58" height="58" rx="13" fill="#f4f4f4"/><g><g fill-opacity=".7"><ellipse cx="29" cy="15" rx="8" ry="11.500" fill="#777"/><ellipse cx="29" cy="43" rx="8" ry="11.500" fill="#888"/><ellipse cx="15" cy="29" rx="11.500" ry="8" fill="#777"/><ellipse cx="43" cy="29" rx="11.500" ry="8" fill="#999"/><g transform="rotate(45 29 29)"><ellipse cx="29" cy="15" rx="8" ry="11.500" fill="#999"/><ellipse cx="29" cy="43" rx="8" ry="11.500" fill="#777"/><ellipse cx="15" cy="29" rx="11.500" ry="8" fill="#777"/><ellipse cx="43" cy="29" rx="11.500" ry="8" fill="#666"/></g></g><circle cx="29" cy="29" r="2" fill="#eee"/></g></svg>
    <svg viewBox="-9 -14 76 92"><rect width="58" height="58" rx="13" fill="url(#lt)"/><rect x="8" y="16" width="29" height="26" rx="7" fill="url(#wh)"/><path d="M40 25l8-7q3 0 3 3v16q0 3-3 3l-8-7z" fill="#e5e5e5"/></svg>
    <svg viewBox="-9 -14 76 92"><rect width="58" height="58" rx="13" fill="#f7f7f7"/><path d="M0 18v-5Q0 0 13 0h32q13 0 13 13v5z" fill="#666"/><text x="29" y="14.500" text-anchor="middle" class="glyph bold" font-size="12" fill="#fff">MAR</text><text x="29" y="48" text-anchor="middle" class="glyph" font-size="35" textLength="39" fill="#222">25</text></svg>
    <svg viewBox="-9 -14 76 92"><rect x="1" y="1" width="56" height="56" rx="13" fill="#eee" stroke="#999" stroke-width="2"/><path d="M21 12h17v20h8L30 47 13 32h8z" fill="#858585"/><path d="M34 29h24l4 31H31z" fill="#a7a7a7" stroke="#888"/><circle cx="47" cy="44" r="9" fill="#ccc" stroke="#888"/><path d="M39 31h14v3H39zM34 56h24v3H34z" fill="#222"/></svg>
    <svg viewBox="-9 -14 76 92"><rect x="4" y="8" width="56" height="43" rx="8" fill="#bbb"/><rect width="57" height="58" rx="13" fill="#707070"/><circle cx="31" cy="29" r="18" fill="#686868" stroke="#555" stroke-width="2"/><circle cx="31" cy="24" r="7" fill="#555"/><path d="M18 41q2-8 13-8t13 8q-13 12-26 0z" fill="#555"/></svg>
    <svg viewBox="-9 -14 76 92"><rect width="58" height="58" rx="13" fill="#f6f6f6"/><path d="M21 14h35M21 29h35M21 44h35" stroke="#bbb" stroke-width="1.500"/><g fill="#777" stroke="#ccc" stroke-width="2"><circle cx="11" cy="14" r="4.500"/><circle cx="11" cy="29" r="4.500"/><circle cx="11" cy="44" r="4.500"/></g></svg>
    <svg viewBox="-9 -14 76 92"><rect width="58" height="58" rx="13" fill="url(#wh)"/><path d="M0 16v-3Q0 0 13 0h32q13 0 13 13v3z" fill="#aaa"/><path d="M0 29h58M0 42h58" stroke="#ccc" stroke-width="1.500"/><path d="M1 17h56" stroke="#999" stroke-dasharray="1 2"/></svg>
    <svg viewBox="-9 -14 76 92"><rect width="58" height="58" rx="13" fill="#1c1c1c"/><path d="M18 17q0 4-4 4 0-3 4-4zM14 23q4-2 8 1-4 4 1 8-4 7-9 5-6 1-6-7 1-8 6-7z" fill="#fff"/><text x="37" y="38" text-anchor="middle" class="glyph bold" font-size="23" textLength="23" fill="#fff">tv</text><circle cx="52" cy="6" r="13" fill="#5a5a5a"/><text x="52" y="12" text-anchor="middle" class="glyph" font-size="16" fill="#fff">1</text></svg>
    <svg viewBox="-9 -14 76 92"><path d="M13 19q0-18 17-17 15 1 15 14 0 7-8 13-8 6-8 15" fill="none" stroke="#999" stroke-width="3.500"/><path d="M26 50h6v7h-6z" fill="#999"/></svg>
    <svg viewBox="-9 -14 76 92"><rect width="58" height="58" rx="13" fill="url(#md)"/><path d="M21 16l21-6v31M21 16v27" fill="none" stroke="#fff" stroke-width="3"/><path d="M21 15l21-6v7l-21 6z" fill="#fff"/><ellipse cx="17" cy="43" rx="6" ry="5" fill="#fff"/><ellipse cx="37" cy="40" rx="6" ry="5" fill="#fff"/></svg>
    <svg viewBox="-9 -14 76 92"><rect width="58" height="58" rx="13" fill="url(#md)"/><g fill="none" stroke="#fff" stroke-width="2.600"><path d="M19 45A20 20 0 1 1 39 45"/><path d="M21 37A13 13 0 1 1 37 37"/></g><circle cx="29" cy="26" r="5" fill="#fff"/><path d="M24 35q5-4 10 0l-2 15q-3 3-6 0z" fill="#fff"/></svg>
    <svg viewBox="-9 -14 76 92"><rect width="58" height="58" rx="13" fill="#9a9a9a"/><path d="M33 13L15 45M26 13l18 32M10 36h22M39 36h10" stroke="#fff" stroke-width="4.500" stroke-linecap="round"/><circle cx="52" cy="6" r="13" fill="#5a5a5a"/><text x="52" y="12" text-anchor="middle" class="glyph" font-size="16" fill="#fff">1</text></svg>
    <svg class="on" viewBox="-9 -14 76 92"><rect width="58" height="58" rx="13" fill="#9a9a9a"/><circle cx="29" cy="29" r="25" fill="#333"/><circle cx="29" cy="29" r="23" fill="none" stroke="#888" stroke-width="2" stroke-dasharray="1.500 1.500"/><circle cx="29" cy="29" r="17" fill="#3a3a3a" stroke="#aaa" stroke-width="3.500"/><path d="M29 29h16M29 29l-8-14M29 29l-8 14" stroke="#aaa" stroke-width="3.500"/><circle cx="52" cy="6" r="13" fill="#5a5a5a"/><text x="52" y="12" text-anchor="middle" class="glyph" font-size="16" fill="#fff">2</text></svg>
    <svg class="on" viewBox="-9 -14 76 92"><use href="#chrome" width="58" height="58"/></svg>
    <svg class="on" viewBox="-9 -14 76 92"><path d="M12 2h43q1 0 1 2v52H11V3z" fill="#777"/><path d="M26 9h15v17H26z" fill="#aaa"/><path d="M41 9h15v17H41z" fill="#e5e5e5"/><path d="M26 24h30v16H26z" fill="#999"/><path d="M10 30l48 0-18 12 18 14H12z" fill="#b7b7b7"/><path d="M58 31v25L10 56l24-16z" fill="#cfcfcf"/><rect x="-4" y="13" width="32" height="32" rx="3" fill="#6a6a6a"/><circle cx="12" cy="29" r="6.500" fill="none" stroke="#fff" stroke-width="4"/></svg>
    <svg viewBox="-9 -14 76 92"><ellipse cx="29" cy="29" rx="32" ry="32" fill="#545454"/><path d="M29 3a24 26 0 0 1 0 52q18-6 18-26T29 3z" fill="#7a7a7a"/><ellipse cx="28" cy="29" rx="16" ry="26" fill="#343434"/></svg>
  </div>
  <i class="sep"></i>
  <div class="g2">
    <svg class="on" viewBox="-9 -14 76 92"><use href="#web" x="-6" y="-6" width="70" height="70"/></svg>
    <svg class="on" viewBox="-9 -14 76 92"><rect width="58" height="58" rx="13" fill="#f6f6f6"/><circle cx="29" cy="29" r="25" fill="#9a9a9a"/><path d="M12 29l31-12-5 27-11-8-6 6v-9z" fill="#fff"/></svg>
    <svg class="on" viewBox="-9 -14 76 92"><rect x="1.500" y="1.500" width="55" height="55" rx="12" fill="#1b1b1b" stroke="#ddd" stroke-width="2.500"/><rect x="4" y="4" width="50" height="50" rx="9" fill="none" stroke="#000" stroke-width="3"/><path d="M11 11l6 4-6 4M20 21h9" fill="none" stroke="#fff" stroke-width="2.200"/></svg>
    <svg class="on" viewBox="-9 -14 76 92"><rect x="-2" y="-2" width="62" height="62" rx="3" fill="#4c4c4c"/><path d="M47 6v15L25 29l22 9v6L11 52V38l20-8-20-9v-6z" fill="#9a9a9a"/></svg>
    <svg class="on" viewBox="-9 -14 76 92"><rect y="2" width="58" height="54" rx="2" fill="#b2b2b2"/><use href="#fork" x="7" y="7" width="46" height="46" color="#444"/></svg>
    <svg class="on" viewBox="-9 -14 76 92"><use href="#skype" width="58" height="58"/></svg>
    <svg class="on" viewBox="-9 -14 76 92"><rect width="58" height="58" rx="13" fill="#d2d2d2"/><rect x="13" y="7" width="32" height="44" rx="4" fill="#292929"/><rect x="17" y="11" width="24" height="9" fill="#444"/><path d="M21 27h.1M29 27h.1M37 27h.1M21 36h.1M29 36h.1M37 36h.1M37 45h.1M21 45h8" stroke="#ddd" stroke-width="6" stroke-linecap="round"/></svg>
    <svg class="on" viewBox="-9 -14 76 92"><use href="#office" x="-3" width="64" height="58"/><text x="13" y="38" text-anchor="middle" class="glyph bold" font-size="23" fill="#fff">X</text></svg>
    <svg class="on" viewBox="-9 -14 76 92"><use href="#office" x="-3" width="64" height="58"/><text x="13" y="38" text-anchor="middle" class="glyph bold" font-size="22" fill="#fff">W</text></svg>
    <svg class="on" viewBox="-9 -14 76 92"><path d="M7 39h44l7 24H0z" fill="#777"/><path d="M25-3h8l14 50q-18 12-36 0z" fill="#777"/><path d="M23 7q6 3 12 0l4 11q-10 4-20 0zM17 32q12 6 24 0l4 12q-16 7-32 0z" fill="#eee"/></svg>
    <svg class="on" viewBox="-9 -14 76 92"><path d="M5-3h30l18 18v46H5z" fill="#f3f3f3"/><path d="M35-3v18h18z" fill="#c5c5c5"/><path d="M-6 63l6-8-3-2h6v8l-2-3-5 6z" fill="#111" stroke="#ccc"/></svg>
  </div>
  <i class="sep"></i>
  <div class="g3">
    <svg viewBox="-9 -14 76 92"><path d="M9-5h24l14 14v20H9z" fill="#e3e3e3"/><path d="M13 0h8M13 4h14M13 7h8" stroke="#777"/><path d="M-1 12q0-4 4-4h15l4 4h33q4 0 4 4v38q0 4-4 4H3q-4 0-4-4z" fill="#a0a0a0"/><path d="M-1 16h60v37q0 5-4 5H3q-4 0-4-5z" fill="#c8c8c8"/></svg>
    <svg viewBox="-9 -14 76 92"><path d="M4 2h50l-7 54q-18 8-36 0z" fill="#737373"/><path d="M10 10l4 42M48 10l-4 42M28 14v40" stroke="#999" stroke-width="3" opacity=".6"/><path d="M6 4l8-8 8 5 8-6 7 5 8-3 7 8-5 6-9-2-8 5-8-6-8 5z" fill="#ddd"/><path d="M12 1l6 5 5-7 8 9 7-8 6 7" fill="none" stroke="#777" stroke-width="2"/></svg>
  </div>
</div>
<script src="fit.js"></script>
</body>
</html>
```
FILE: styles.css
```css
* { box-sizing: border-box; }
body { margin: 0; width: 2880px; height: 1800px; overflow: hidden; position: relative; background: #111; font-family: Inter, "Liberation Sans", sans-serif; font-size: 26px; color: #1c1c1c; }
svg { display: block; flex: none; overflow: visible; }
span, b, li { white-space: nowrap; }
i { font-style: normal; }
ul, p, h2, h3 { margin: 0; padding: 0; list-style: none; font-weight: 400; }
[data-w] { display: inline-block; white-space: pre; }
.defs { position: absolute; }
.wallpaper { position: absolute; left: 0; bottom: 0; }
.glyph { font-family: Inter, sans-serif; }
.bold { font-weight: 700; }
.qt { font-family: "Open Sans", sans-serif; font-weight: 600; }
.window { position: absolute; overflow: hidden; isolation: isolate; }
.lights { display: flex; gap: 16px; }
.lights i { width: 24px; height: 24px; border-radius: 50%; }

.menubar { height: 49px; display: flex; line-height: 47px; background: linear-gradient(90deg, #cacaca, #dadada 35%, #d6d6d6 60%, #c4c4c4); border-bottom: 1px solid #777; }
.menus { display: flex; gap: 42px; flex: 1; }
.tray { display: flex; width: 1040px; }
.date { margin-right: 16px; }

.spyder { left: 0; top: 49px; width: 2878px; height: 1643px; border-radius: 20px; background: #1d1d1d; border: 1px solid #000; border-bottom-color: #4a4a4a; display: flex; flex-direction: column; justify-content: space-between; }
.spyder .titlebar { height: 57px; background: #ebebeb; border-bottom: 1px solid #222; display: grid; grid-template-columns: 1193px auto; align-items: center; justify-items: start; padding-left: 13px; color: #a9a9a9; line-height: 54px; flex: none; }
.spyder .lights i { background: #d0d0d0; border: 1px solid #b9b9b9; }
.tools { height: 58px; margin-bottom: auto; margin-left: -1px; width: 2880px; background: linear-gradient(#444, #3b3b3b); display: flex; }
.path { width: 1026px; height: 47px; margin-top: 11px; border-radius: 6px 6px 0 0; background: #202020; display: flex; justify-content: space-between; padding-left: 20px; line-height: 46px; color: #e6e6e6; }
.path i { width: 25px; border-left: 1px solid #444; display: flex; align-items: center; justify-content: center; }
.status { height: 49px; background: linear-gradient(#1e1e1e, #2c2c2c); display: flex; padding-left: 737px; font: 27px/42px "Liberation Sans", sans-serif; color: #8a8a8a; }
.status span:nth-of-type(1) { margin-right: 69px; }
.status span:nth-of-type(2) { margin-right: 71px; }
.status span:nth-of-type(3) { margin-right: 74px; }
.status span:nth-of-type(4) { margin-right: 75px; }
.status span:nth-of-type(5) { margin-right: 75px; }
.status span:nth-of-type(6) { margin-right: 74px; }
.status span:nth-of-type(7) { margin-right: 76px; }
.status span:nth-of-type(8) { margin-right: 82px; }

.chrome { left: 0; top: 165px; width: 2880px; height: 1476px; border-radius: 22px; background: #363636; border-top: 1px solid #000; color: #fff; box-shadow: 0 10px 40px rgba(0,0,0,.6); }
.tabs { height: 84px; background: #202020; border-top: 2px solid #606060; display: flex; font-size: 24px; color: #c5c5c5; }
.tabs .lights { padding: 29px 0 0 42px; width: 210px; }
.tabs .lights i { background: #757575; }
.tabs .lights i:nth-child(2) { background: #9f9f9f; }
.tabs .lights i:nth-child(3) { background: #979797; }
.tab { margin-top: 14px; height: 68px; display: flex; align-items: center; gap: 16px; line-height: 66px; }
.t1 { width: 456px; border-image: linear-gradient(transparent 15px, #666 15px, #666 55px, transparent 55px) 1; border-right: 2px solid; padding-right: 22px; }
.t2 { width: 476px; padding: 0 21px 0 25px; gap: 18px; }
.close { margin-left: auto; }
.tab.active { width: 480px; padding: 0 23px 0 24px; background: #363636; border-radius: 16px 16px 0 0; color: #fff; }
.tabs > svg { margin-top: 14px; }
.fade { -webkit-mask: linear-gradient(90deg, #000 85%, rgba(0,0,0,.3)); mask: linear-gradient(90deg, #000 85%, rgba(0,0,0,.3)); }
.tab .fade + .close { margin-left: 12px; }
.toolbar { height: 72px; padding-top: 2px; display: flex; }
.omnibox { width: 1811px; height: 60px; margin-top: 4px; border: 4px solid #666; border-radius: 30px; background: #202020; display: flex; align-items: center; padding: 0 19px 0 24px; font-size: 27px; }
.sel { background: #6a6a6a; height: 36px; line-height: 36px; width: 362px; margin-left: 23px; }
.qr { margin: 0 35px 0 auto; }
.bookmarks { height: 64px; padding-top: 8px; display: flex; font-size: 24px; line-height: 39px; }
.bookmarks svg + span { margin-right: 33px; }

.page { height: 1254px; border-top: 2px solid #222; background: #f2f2f2; font-family: Roboto, sans-serif; font-size: 31px; line-height: 40px; color: #404244; }
.site { height: 100px; position: relative; z-index: 1; background: #fff; box-shadow: 0 2px 16px rgba(0,0,0,.28); display: flex; justify-content: space-between; padding-left: 160px; }
.logo { margin-top: 14px; }
.site nav { display: flex; line-height: 100px; font-size: 27px; color: #111; padding-right: 189px; }
.contact { margin-left: 60px; width: 258px; padding-left: 67px; border: solid #eee; border-width: 0 2px; }
.user { width: 146px; padding: 29px 0 0 72px; }
.columns { display: flex; gap: 40px; padding-left: 160px; }
aside { width: 472px; color: #828282; }
.card li { min-height: 40px; margin-bottom: 16px; }
.card [data-w] { vertical-align: top; }
.card { background: #fff; padding-left: 50px; }
.card.first { height: 314px; margin-bottom: 40px; padding-top: 1px; overflow: hidden; }
.first li:first-child { margin-top: -9px; }
.card.second { height: 758px; padding-top: 47px; }
.card h3 { font-size: inherit; color: #404244; margin-bottom: 28px; height: 40px; }
main { width: 2048px; height: 1152px; background: #fff; padding: 63px 70px 0 60px; overflow: hidden; }
main p { margin-bottom: 48px; white-space: nowrap; }
main p [data-w], main h2 [data-w] { vertical-align: top; }
main .covered { margin-left: 677px; }
main h2 .covered { margin-left: 662px; }
main h2 { font-size: 45px; line-height: 46px; padding-bottom: 29px; border-bottom: 4px solid #eee; margin-bottom: 37px; display: flex; justify-content: space-between; color: #262626; white-space: nowrap; height: 79px; }
main h2 div { flex: none; }
main p + h2 { margin-top: 100px; height: 125px; }
main p:has(+ h2) { margin-bottom: 0; }
main i { font-style: italic; }
main a { color: #828282; }
main h2 code { flex: none; margin: 5px 0 0; padding: 0 10px; height: 46px; background: #eee; font: 33.500px/46px "DejaVu Sans Mono", monospace; }
.mono { font-family: "DejaVu Sans Mono", monospace; font-size: 31px; }

.dialog { left: 1495px; top: 423px; width: 678px; height: 627px; border-radius: 20px; background: #262626; border: 2px solid #5c5c5c; outline: 1px solid #111; box-shadow: 0 20px 60px rgba(0,0,0,.55), 0 0 30px rgba(0,0,0,.2); color: #dfdfdf; font-weight: 500; }
.dialog .titlebar { height: 56px; background: #303030; border-bottom: 2px solid #000; display: grid; grid-template-columns: 170px auto; justify-items: start; padding-left: 15px; align-items: center; line-height: 52px; color: #757575; }
.dialog .lights i { background: #575757; }
.body { padding: 40px 39px 0; }
.body p { line-height: 32px; }
.dialog ul { height: 336px; margin-top: 15px; border: 2px solid #363636; overflow: hidden; }
.dialog li { height: 44px; line-height: 42px; display: flex; align-items: center; gap: 17px; padding-left: 17px; }
.dialog li:first-child { margin-top: -23px; }
.dialog footer { display: flex; justify-content: space-between; margin-top: 28px; }
.dialog footer p { font-size: 21.500px; line-height: 26px; }
.dialog button { width: 168px; height: 40px; margin-top: 3px; border: 0; border-radius: 10px; background: #424242; color: #707070; font: 500 26px/38px Inter, sans-serif; padding: 0; }

.dock { position: absolute; left: 58px; top: 1696px; width: 2764px; height: 94px; border: 2px solid #666; border-radius: 28px; background: linear-gradient(90deg, #333, #4b4b4b 20%, #4b4b4b 30%, #373737 50%, #363636); display: flex; padding-left: 3.600px; }
.dock div { display: flex; }
.dock svg { height: 92px; width: 76.700px; margin-top: -1px; }
.g2 svg { width: 76.800px; }
.g3 svg { width: 76px; }
.sep { width: 2px; height: 70px; background: #777; margin: 10px 14px 0 17px; }
.g2 + .sep { margin: 10px 15px 0 16px; }
.dock .on { background: radial-gradient(circle 4px at 38px 86px, #ccc 3.500px, transparent 4.500px); }
```
FILE: fit.js
```js
// Track every label so that it spans its designed width, whatever font is installed.
document.querySelectorAll('[data-w]').forEach(function (el) {
  var want = parseFloat(el.dataset.w);
  var have = el.getBoundingClientRect().width;
  el.style.letterSpacing = (want - have) / el.textContent.length + 'px';
});
```
